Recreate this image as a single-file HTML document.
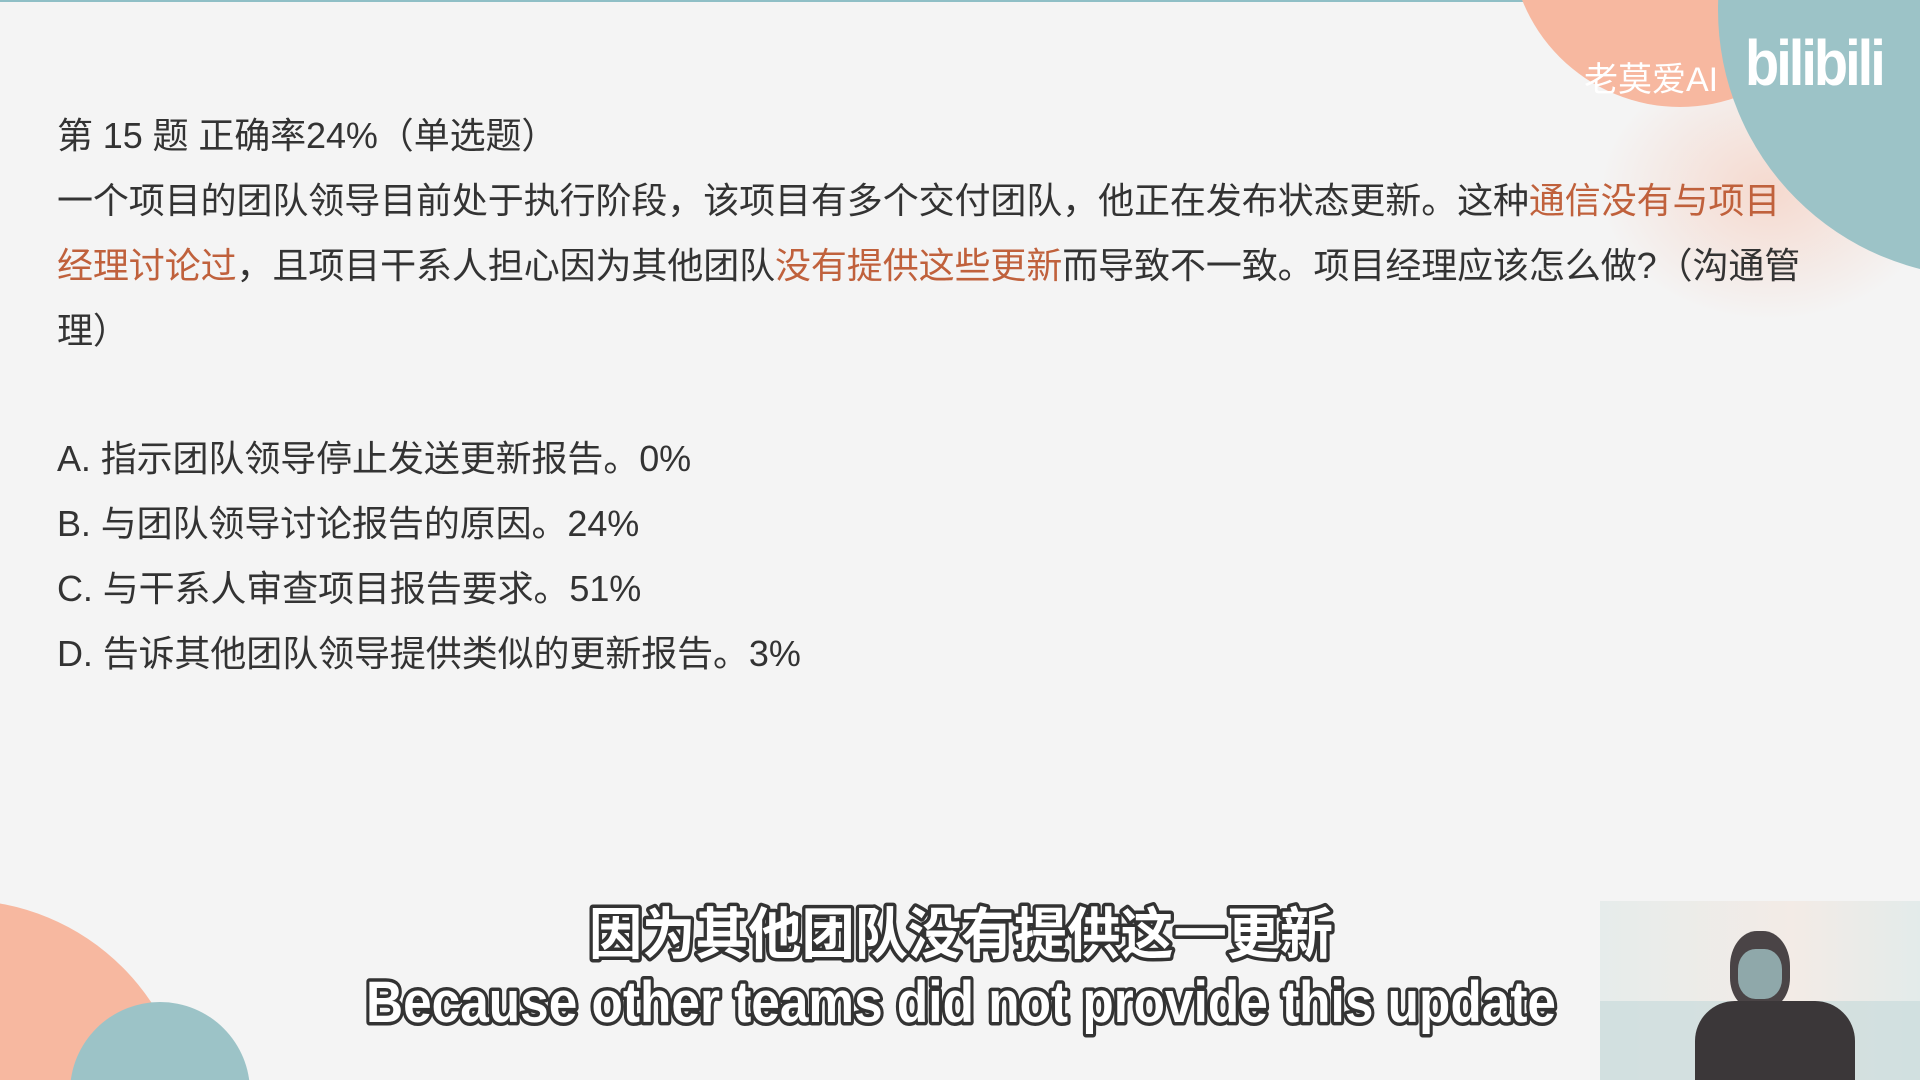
<!DOCTYPE html>
<html style="overflow:hidden"><head><meta charset="utf-8"><style>
html,body{margin:0;padding:0;width:1920px;height:1080px;overflow:hidden;}
#w{width:1920px;height:1080px;position:relative;overflow:hidden;background:#f4f4f4;font-family:"Liberation Sans","Noto Sans CJK SC",sans-serif;color:#333;}
.l{position:absolute;left:57px;font-size:36px;line-height:64px;letter-spacing:-0.1px;white-space:nowrap;}
.r{color:#c0613c;}
</style></head><body><div id="w">
<svg style="position:absolute;left:0;top:0" width="1920" height="1080">
<defs><radialGradient id="g"><stop offset="0" stop-color="#f7b8a0" stop-opacity=".45"/><stop offset="1" stop-color="#f7b8a0" stop-opacity="0"/></radialGradient></defs>
<rect x="0" y="0" width="1920" height="2" fill="#8fbfc6"/>
<ellipse cx="1770" cy="190" rx="170" ry="130" fill="url(#g)"/>
<circle cx="1680" cy="-63" r="170" fill="#f7b8a0"/>
<circle cx="1985" cy="10" r="267" fill="#9cc3c7"/>
<circle cx="-40" cy="1130" r="230" fill="#f7b8a0"/>
<circle cx="160" cy="1092" r="90" fill="#9cc3c7"/>
</svg>
<div style="position:absolute;left:1584px;top:52px;font-size:34px;color:#fff;">老莫爱AI</div>
<div style="position:absolute;left:1745px;top:30px;font-size:56px;color:#fff;font-weight:bold;letter-spacing:-3px;transform:scaleY(1.15)">bilibili</div>

<div class="l" style="top:104px">第 15 题 正确率24%（单选题）</div>
<div class="l" style="top:169px">一个项目的团队领导目前处于执行阶段，该项目有多个交付团队，他正在发布状态更新。这种<span class="r">通信没有与项目</span></div>
<div class="l" style="top:234px"><span class="r">经理讨论过</span>，且项目干系人担心因为其他团队<span class="r">没有提供这些更新</span>而导致不一致。项目经理应该怎么做?（沟通管</div>
<div class="l" style="top:299px">理）</div>
<div class="l" style="top:427px">A. 指示团队领导停止发送更新报告。0%</div>
<div class="l" style="top:492px">B. 与团队领导讨论报告的原因。24%</div>
<div class="l" style="top:557px">C. 与干系人审查项目报告要求。51%</div>
<div class="l" style="top:622px">D. 告诉其他团队领导提供类似的更新报告。3%</div>

<div style="position:absolute;left:1600px;top:901px;width:320px;height:179px;background:linear-gradient(90deg,#e6eceb,#f3ebe6 60%,#e3ebea);overflow:hidden">
 <div style="position:absolute;left:0;top:100px;width:320px;height:79px;background:#c9dcdc;opacity:.7"></div>
 <div style="position:absolute;left:130px;top:30px;width:60px;height:78px;border-radius:45% 45% 40% 40%;background:#4a4446"></div>
 <div style="position:absolute;left:138px;top:48px;width:44px;height:50px;border-radius:40%;background:#8fa8aa"></div>
 <div style="position:absolute;left:95px;top:100px;width:160px;height:79px;border-radius:40px 40px 0 0;background:#3b3739"></div>
</div>

<svg style="position:absolute;left:0;top:0" width="1920" height="1080">
<g font-family="Liberation Sans,Noto Sans CJK SC,sans-serif" font-weight="bold" fill="#fff" stroke="#333" stroke-width="7" paint-order="stroke" stroke-linejoin="round">
<text x="589" y="954" font-size="56" textLength="744" lengthAdjust="spacingAndGlyphs">因为其他团队没有提供这一更新</text>
<text x="366" y="1022" font-size="58" textLength="1190" lengthAdjust="spacingAndGlyphs">Because other teams did not provide this update</text>
</g></svg>
</div></body></html>
